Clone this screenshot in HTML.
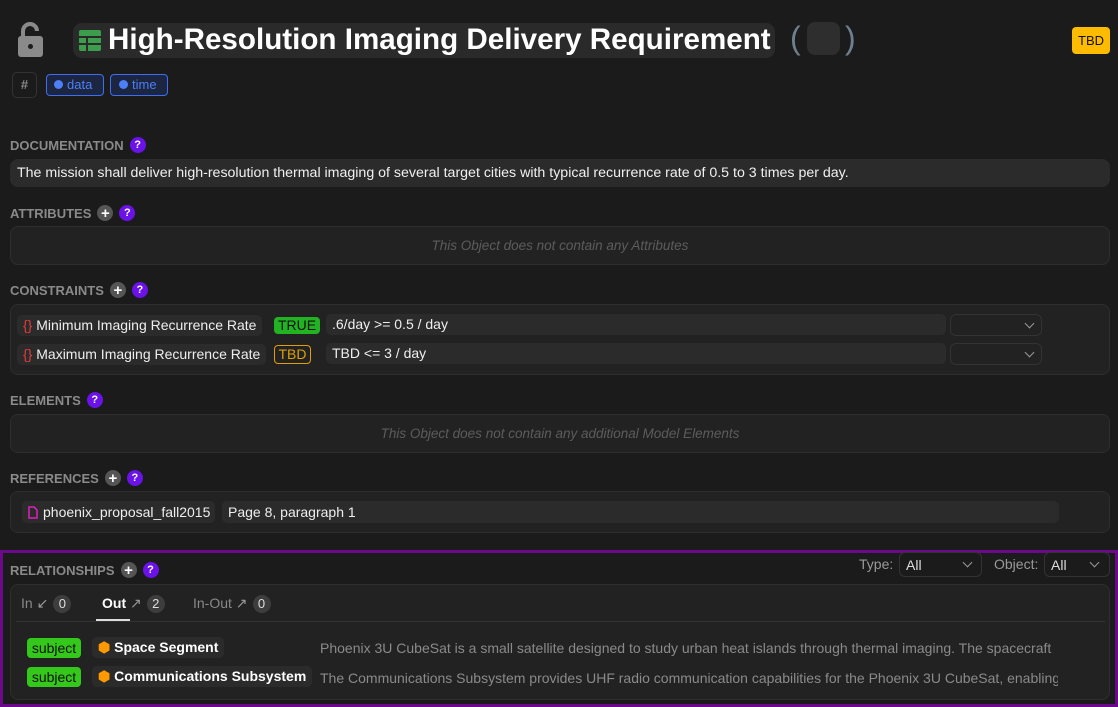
<!DOCTYPE html>
<html><head><meta charset="utf-8"><style>
*{box-sizing:border-box;margin:0;padding:0}
body{width:1118px;height:707px;background:#1b1b1b;font-family:"Liberation Sans",sans-serif;color:#e8e8e8;position:relative;overflow:hidden;font-size:14px}
.a{position:absolute;white-space:nowrap}
.lbl{position:absolute;left:10px;font-size:13px;font-weight:bold;color:#8a8a8a;display:flex;align-items:center;gap:6px}
.q{width:16px;height:16px;border-radius:50%;background:#6a12e8;color:#fff;font-size:11px;font-weight:bold;display:inline-flex;align-items:center;justify-content:center}
.p{width:16px;height:16px;border-radius:50%;background:#555;color:#fff;font-size:15px;font-weight:bold;display:inline-flex;align-items:center;justify-content:center;line-height:1}
.box{position:absolute;left:10px;width:1100px;background:#222;border:1px solid #2e2e2e;border-radius:8px}
.empty{color:#5c5c5c;font-style:italic;font-size:13.5px;text-align:center}
.chip{position:absolute;background:#2b2b2b;border-radius:5px;height:21px;line-height:21px;padding:0 6px;font-size:14px;color:#eee;white-space:nowrap}
.sel{position:absolute;border:1px solid #333;border-radius:6px;height:22px}
.chev{position:absolute;width:7px;height:7px;border-right:1.5px solid #999;border-bottom:1.5px solid #999;transform:rotate(45deg)}
.badge{position:absolute;border-radius:4px;height:17px;line-height:17px;font-size:14px;text-align:center}
.cnt{display:inline-block;width:18px;height:18px;border-radius:50%;background:#3d3d3d;color:#ddd;font-size:13px;text-align:center;line-height:18px;vertical-align:middle;margin-left:5px;font-weight:normal}
</style></head><body>
<svg class="a" style="left:17px;top:22px" width="28" height="36" viewBox="0 0 28 36"><path d="M6 14V9a7 7 0 0 1 14 0" fill="none" stroke="#8a8a8a" stroke-width="4"/><rect x="1" y="14" width="25" height="21" rx="3" fill="#8a8a8a"/><circle cx="13.5" cy="24.5" r="2.5" fill="#1b1b1b"/></svg>
<div class="a" style="left:73px;top:23px;width:702px;height:35px;background:#2a2a2a;border-radius:9px"></div>
<svg class="a" style="left:79px;top:30px" width="22" height="21" viewBox="0 0 22 21"><rect x="0" y="0" width="22" height="21" rx="2" fill="#3c9e4d"/><path d="M0 7H22M0 14H22M8 7V21" stroke="#2a2a2a" stroke-width="2"/></svg>
<div class="a" style="left:108px;top:23px;font-size:29.6px;font-weight:bold;color:#fff">High-Resolution Imaging Delivery Requirement</div>
<div class="a" style="left:790px;top:20px;font-size:32px;color:#6f7f8f">(</div>
<div class="a" style="left:807px;top:22px;width:33px;height:33px;background:#2e2e2e;border-radius:8px"></div>
<div class="a" style="left:845px;top:20px;font-size:32px;color:#6f7f8f">)</div>
<div class="a" style="left:1072px;top:27px;width:38px;height:27px;background:#ffbb00;border-radius:4px;color:#111;font-size:13px;text-align:center;line-height:27px">TBD</div>
<div class="a" style="left:12px;top:72px;width:25px;height:26px;border:1px solid #333;border-radius:5px;color:#888;font-weight:bold;text-align:center;line-height:24px;font-size:13px">#</div>
<div class="a" style="left:46px;top:74px;width:58px;height:22px;border:1px solid #3d6ff0;border-radius:4px;background:#1c2640;color:#4d7ff7;font-size:13px;line-height:20px;padding-left:7px"><span style="display:inline-block;width:9px;height:9px;border-radius:50%;background:#4d7ff7;margin-right:4px"></span>data</div>
<div class="a" style="left:110px;top:74px;width:58px;height:22px;border:1px solid #3d6ff0;border-radius:4px;background:#1c2640;color:#4d7ff7;font-size:13px;line-height:20px;padding-left:8px"><span style="display:inline-block;width:9px;height:9px;border-radius:50%;background:#4d7ff7;margin-right:4px"></span>time</div>

<div class="lbl" style="top:137px">DOCUMENTATION <span class="q">?</span></div>
<div class="a" style="left:10px;top:159px;width:1100px;height:28px;background:#2b2b2b;border-radius:8px;padding-left:7px;line-height:28px;font-size:14.2px;color:#f0f0f0">The mission shall deliver high-resolution thermal imaging of several target cities with typical recurrence rate of 0.5 to 3 times per day.</div>

<div class="lbl" style="top:205px">ATTRIBUTES <span class="p">+</span><span class="q">?</span></div>
<div class="box empty" style="top:226px;height:39px;line-height:37px">This Object does not contain any Attributes</div>

<div class="lbl" style="top:282px">CONSTRAINTS <span class="p">+</span><span class="q">?</span></div>
<div class="box" style="top:304px;height:71px"></div>
<div class="chip" style="left:17px;top:315px"><span style="color:#e53b3b">{}</span> Minimum Imaging Recurrence Rate</div>
<div class="badge" style="left:274px;top:317px;width:46px;background:#22b322;color:#111">TRUE</div>
<div class="chip" style="left:326px;top:314px;width:620px">.6/day &gt;= 0.5 / day</div>
<div class="sel" style="left:950px;top:314px;width:92px"><div class="chev" style="left:75px;top:5px"></div></div>
<div class="chip" style="left:17px;top:344px"><span style="color:#e53b3b">{}</span> Maximum Imaging Recurrence Rate</div>
<div class="badge" style="left:274px;top:345px;width:37px;border:1px solid #e0a000;color:#e0a000;height:19px;line-height:17px">TBD</div>
<div class="chip" style="left:326px;top:343px;width:620px">TBD &lt;= 3 / day</div>
<div class="sel" style="left:950px;top:343px;width:92px"><div class="chev" style="left:75px;top:5px"></div></div>

<div class="lbl" style="top:392px">ELEMENTS <span class="q">?</span></div>
<div class="box empty" style="top:414px;height:39px;line-height:37px">This Object does not contain any additional Model Elements</div>

<div class="lbl" style="top:470px">REFERENCES <span class="p">+</span><span class="q">?</span></div>
<div class="box" style="top:491px;height:42px"></div>
<div class="chip" style="left:22px;top:501px;width:193px;height:22px;line-height:22px"><svg width="10" height="13" viewBox="0 0 10 13" style="vertical-align:-2px;margin-right:5px"><path d="M1 1H6L9 4V12H1Z" fill="none" stroke="#e020c0" stroke-width="1.5"/></svg>phoenix_proposal_fall2015</div>
<div class="chip" style="left:222px;top:501px;width:837px;height:22px;line-height:22px">Page 8, paragraph 1</div>

<div class="a" style="left:0;top:550px;width:1118px;height:157px;border:3px solid #6a0a8a"></div>
<div class="lbl" style="top:562px">RELATIONSHIPS <span class="p">+</span><span class="q">?</span></div>
<div class="a" style="left:859px;top:556px;color:#999;font-size:14px">Type:</div>
<div class="sel" style="left:899px;top:552px;width:83px;height:25px"><span class="a" style="left:6px;top:4px;color:#ddd">All</span><div class="chev" style="left:64px;top:6px"></div></div>
<div class="a" style="left:994px;top:556px;color:#999;font-size:14px">Object:</div>
<div class="sel" style="left:1044px;top:552px;width:66px;height:25px"><span class="a" style="left:6px;top:4px;color:#ddd">All</span><div class="chev" style="left:46px;top:6px"></div></div>
<div class="box" style="top:584px;height:116px"></div>
<div class="a" style="left:16px;top:621px;width:1089px;height:1px;background:#333"></div>
<div class="a" style="left:21px;top:595px;color:#888">In <span style="color:#999">&#8601;</span><span class="cnt">0</span></div>
<div class="a" style="left:102px;top:595px;color:#fff;font-weight:bold">Out <span style="color:#999;font-weight:normal">&#8599;</span><span class="cnt">2</span></div>
<div class="a" style="left:96px;top:619px;width:34px;height:2px;background:#ddd"></div>
<div class="a" style="left:193px;top:595px;color:#888">In-Out <span style="color:#999">&#8599;</span><span class="cnt">0</span></div>

<div class="badge" style="left:27px;top:638px;width:54px;height:20px;line-height:20px;background:#34c81a;color:#111">subject</div>
<div class="chip" style="left:92px;top:637px;font-weight:bold;color:#fff"><span style="color:#ff9900">&#11042;</span> Space Segment</div>
<div class="a" style="left:320px;top:640px;color:#8a8a8a;font-size:14px;width:733px;overflow:hidden">Phoenix 3U CubeSat is a small satellite designed to study urban heat islands through thermal imaging. The spacecraft is</div>
<div class="badge" style="left:27px;top:667px;width:54px;height:20px;line-height:20px;background:#34c81a;color:#111">subject</div>
<div class="chip" style="left:92px;top:666px;font-weight:bold;color:#fff"><span style="color:#ff9900">&#11042;</span> Communications Subsystem</div>
<div class="a" style="left:320px;top:670px;color:#8a8a8a;font-size:14px;width:738px;overflow:hidden">The Communications Subsystem provides UHF radio communication capabilities for the Phoenix 3U CubeSat, enabling</div>
</body></html>
